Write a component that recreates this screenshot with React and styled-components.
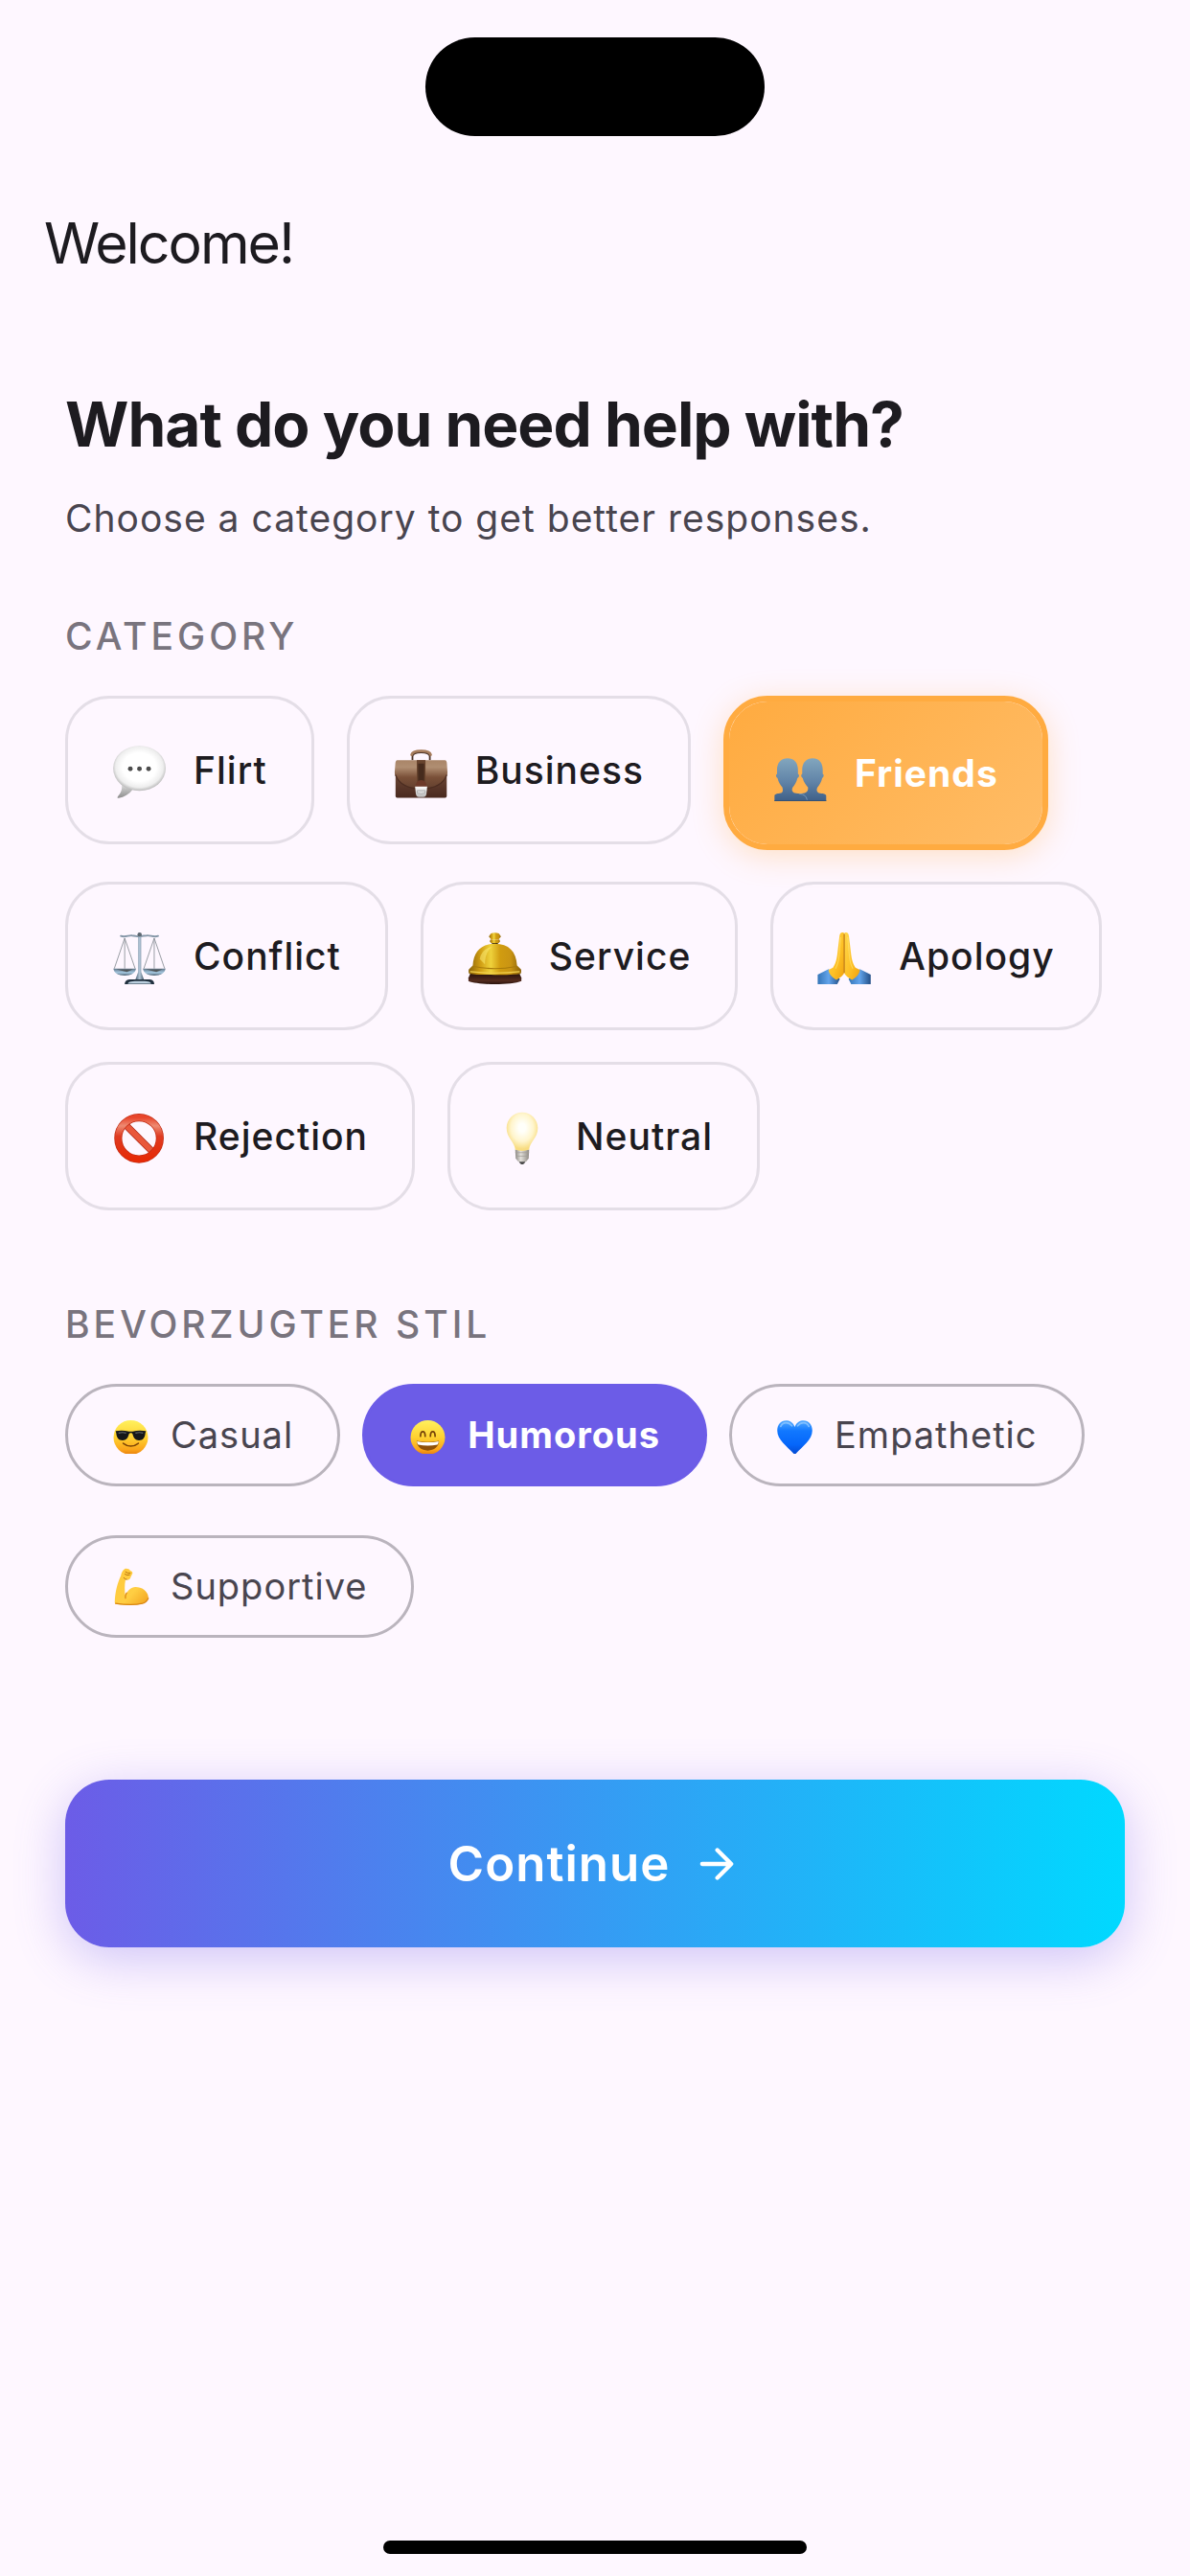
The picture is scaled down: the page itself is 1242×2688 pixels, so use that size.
import React, { useState } from "react";
import styled, { createGlobalStyle, css } from "styled-components";

const GlobalStyle = createGlobalStyle`
  * {
    box-sizing: border-box;
  }

  body {
    margin: 0;
    background: #fef7ff;
    color: #1d1b20;
    font-family: Inter, Roboto, "Liberation Sans", sans-serif;
  }

  button {
    font-family: inherit;
    cursor: pointer;
  }
`;

const Screen = styled.div`
  display: flex;
  flex-direction: column;
  min-height: 100vh;
  padding: 39px 0 23px;
`;

const Island = styled.div`
  align-self: center;
  width: 354px;
  height: 103px;
  border-radius: 52px;
  background: #000;
`;

const Header = styled.header`
  padding: 72px 46px 0;
`;

const Welcome = styled.p`
  margin: 0;
  font-size: 59px;
  line-height: 80px;
  letter-spacing: -2px;
`;

const Main = styled.main`
  display: flex;
  flex-direction: column;
  padding: 109px 68px 0;
`;

const Title = styled.h1`
  margin: 0;
  font-size: 64px;
  line-height: 80px;
  font-weight: 700;
  letter-spacing: -1px;
`;

const Subtitle = styled.p`
  margin: 30px 0 0;
  color: #49454f;
  font-size: 39px;
  line-height: 56px;
  letter-spacing: 1px;
`;

const Section = styled.section`
  display: flex;
  flex-direction: column;
  gap: 38px;
  margin-top: ${({ $space }) => $space}px;
`;

const SectionLabel = styled.h2`
  margin: 0;
  color: #79747e;
  font-size: 39px;
  line-height: 48px;
  font-weight: 500;
  letter-spacing: 4px;
`;

const ChipList = styled.div`
  display: flex;
  flex-wrap: wrap;
  align-items: flex-start;
  gap: ${({ $gap }) => $gap};
`;

const Chip = styled.button`
  display: flex;
  align-items: center;
  color: #1d1b20;
  background: transparent;
  letter-spacing: 1px;
  white-space: nowrap;

  svg {
    display: block;
    flex: none;
  }
`;

const CategoryChip = styled(Chip)`
  gap: 27px;
  padding: 45px 46px;
  border: 3px solid #e4dee7;
  border-radius: 46px;
  font-size: 39px;
  line-height: 59px;
  font-weight: 500;

  svg {
    width: 58px;
    height: 58px;
  }

  ${({ $active }) =>
    $active &&
    css`
      border: 6px solid #ffab40;
      background: linear-gradient(135deg, #ffab40, #ffbc66) padding-box;
      box-shadow: 0 6px 32px rgba(255, 171, 64, 0.3);
      color: #fff;
      font-weight: 700;
    `}
`;

const StyleChip = styled(Chip)`
  gap: 22px;
  padding: 26px 46px;
  border: 3px solid #bab4bd;
  border-radius: 54px;
  color: #49454f;
  font-size: 38px;
  line-height: 49px;
  font-weight: 400;

  svg {
    width: 39px;
    height: 39px;
  }

  ${({ $active }) =>
    $active &&
    css`
      border-color: #6c5ce7;
      background: #6c5ce7;
      color: #fff;
      font-weight: 700;
    `}
`;

const ContinueButton = styled.button`
  display: flex;
  align-items: center;
  justify-content: center;
  gap: 23px;
  margin-top: 148px;
  padding: 56px;
  border: 0;
  border-radius: 46px;
  background: linear-gradient(90deg, #6c5ce7, #00d9ff);
  box-shadow: 0 12px 52px rgba(108, 92, 231, 0.33);
  color: #fff;
  font-size: 51px;
  line-height: 63px;
  font-weight: 600;
  letter-spacing: 1px;

  svg {
    width: 52px;
    height: 52px;
  }
`;

const HomeIndicator = styled.div`
  align-self: center;
  width: 442px;
  height: 14px;
  margin-top: auto;
  border-radius: 7px;
  background: #000;
`;

const Icon = ({ children }) => (
  <svg viewBox="0 0 64 64" aria-hidden="true">
    {children}
  </svg>
);

const SpeechIcon = () => (
  <Icon>
    <defs>
      <radialGradient id="speech" cx="0.5" cy="0.47" r="0.53">
        <stop offset="0.6" stopColor="#fff" />
        <stop offset="0.85" stopColor="#eee" />
        <stop offset="1" stopColor="#b8b8b8" />
      </radialGradient>
      <linearGradient id="speechTail" x1="0" y1="0" x2="0" y2="1">
        <stop offset="0" stopColor="#dcdcdc" />
        <stop offset="1" stopColor="#8d8d8d" />
      </linearGradient>
    </defs>
    <path d="M11 48c1 6-1 10-4.500 14-.8 1.200-.2 2 1.200 1.700 6-1 12-4.500 16-10z" fill="url(#speechTail)" />
    <ellipse cx="31.500" cy="29.500" rx="30.300" ry="26" fill="url(#speech)" />
    <circle cx="21" cy="30" r="2.700" fill="#4c4c4c" />
    <circle cx="31.500" cy="30" r="2.700" fill="#4c4c4c" />
    <circle cx="42" cy="30" r="2.700" fill="#4c4c4c" />
  </Icon>
);

const BriefcaseIcon = () => (
  <Icon>
    <defs>
      <linearGradient id="flap" x1="0" y1="0" x2="0" y2="1">
        <stop offset="0" stopColor="#a98568" />
        <stop offset="0.25" stopColor="#b08e72" />
        <stop offset="0.6" stopColor="#7a5038" />
        <stop offset="1" stopColor="#63402f" />
      </linearGradient>
      <linearGradient id="caseBody" x1="0" y1="0" x2="0" y2="1">
        <stop offset="0" stopColor="#6e4836" />
        <stop offset="1" stopColor="#49291f" />
      </linearGradient>
      <linearGradient id="clasp" x1="0" y1="0" x2="0" y2="1">
        <stop offset="0" stopColor="#fff" />
        <stop offset="1" stopColor="#b9b9b9" />
      </linearGradient>
    </defs>
    <path d="M21.500 20v-4c0-4 5-5 10-5s10 1 10 5v4" fill="none" stroke="#4b3327" strokeWidth="2" />
    <path d="M20.500 14c1-4 6-4.500 11-4.500s10 .5 11 4.500" fill="none" stroke="#a67c5c" strokeWidth="3" strokeLinecap="round" />
    <path d="M2 34h59v27.500q0 2-2 2H4q-2 0-2-2z" fill="url(#caseBody)" />
    <path d="M4 20h55q2 0 2.200 4l.6 10c0 4-1 5-3 7-6 8-15 12-27.300 12S10 49 4 41c-2-2-3-3-3-7l.8-10Q2 20 4 20z" fill="url(#flap)" />
    <path d="M2 37c4 11 15 16 29.500 16S57 48 61 37" fill="none" stroke="#4c2d21" strokeWidth="1.200" />
    <path d="M26.500 20h10v27h-10z" fill="#67432d" />
    <path d="M28 24h7v20h-7z" fill="#462b1d" />
    <path d="M25 51c0-5 3-8 6.500-8s6.500 3 6.500 8z" fill="#6d3a29" />
    <path d="M24.500 50.500h14l-1 9q-.5 3-3 3h-6q-2.500 0-3-3z" fill="url(#clasp)" />
    <path d="M27 55h9v3q-4.500 2-9 0z" fill="#d9d9d9" stroke="#999" strokeWidth=".7" />
  </Icon>
);

const PeopleIcon = () => (
  <Icon>
    <defs>
      <linearGradient id="people" x1="0" y1="14" x2="0" y2="64" gradientUnits="userSpaceOnUse">
        <stop offset="0" stopColor="#83a7be" />
        <stop offset="0.55" stopColor="#6184a8" />
        <stop offset="1" stopColor="#3e5f87" />
      </linearGradient>
    </defs>
    <path
      d="M45.500 14.500c7 0 11.500 5 11.500 13v5c2 1 1 4-.6 5-1 5-3.400 8-5.400 10.500-2 4 0 6.500 3 7 4 .5 7 1 7 3V64H31V55.500c5-.5 10-1.500 9-7.500-2-2.500-5-5.500-6-10.500-1.600-1-2.600-4-.6-5v-5c0-8 5-13 12.100-13z"
      fill="url(#people)"
    />
    <path
      d="M16.500 14.500c7.500 0 12 5 12 13v5c2 1 1.500 4-.6 5-1 5-3.400 8-5.400 10.500-2 4 0 6.500 4 7 6 .5 12 1 12.500 9H1.500v-6c0-2 3-2.500 6-3 4-.5 4-3 3-7C8.500 45.500 6 42.500 5 37.500c-2-1-2.500-4-.6-5v-5c0-8 5-13 12.100-13z"
      fill="url(#people)"
    />
    <path d="M30 55.500q8 .5 9 7" fill="none" stroke="#7b9bb9" strokeWidth="1" />
    <path d="M1.500 63.500H61" stroke="#345074" strokeWidth="1" />
  </Icon>
);

const ScalesIcon = () => (
  <Icon>
    <defs>
      <linearGradient id="steel" x1="0" y1="0" x2="1" y2="0">
        <stop offset="0" stopColor="#40566b" />
        <stop offset="0.5" stopColor="#b5c9da" />
        <stop offset="1" stopColor="#3b4d60" />
      </linearGradient>
      <linearGradient id="pan" x1="0" y1="0" x2="0" y2="1">
        <stop offset="0" stopColor="#5d7285" />
        <stop offset="0.6" stopColor="#a9cbe3" />
        <stop offset="1" stopColor="#46596b" />
      </linearGradient>
    </defs>
    <path d="M10 8.500c5 2 9-1 13-.5 4 0 6 1.500 8.500 1s4.500-1 8.500-1c4-.5 8 2.500 13 .5" fill="none" stroke="#8597a8" strokeWidth="2" strokeLinecap="round" />
    <path d="M14.500 11 2.500 46M14.500 11v35M14.500 11l12 35M48.500 11l-12 35M48.500 11v35M48.500 11l12 35" fill="none" stroke="#8f959c" strokeWidth="1" />
    <path d="M1.500 46h26c-.5 5-5.500 8-13 8s-12.500-3-13-8zM35.500 46h26c-.5 5-5.500 8-13 8s-12.500-3-13-8z" fill="url(#pan)" />
    <path d="M5 47h19l-7 3zM39 47h19l-7 3z" fill="#51565a" />
    <path d="M30 8h3.500v42l3.500 9.500H26.500L30 50z" fill="url(#steel)" />
    <circle cx="31.700" cy="7" r="2.500" fill="#5d6872" />
    <path d="M14.500 64c0-4 3-5.500 7-5.500h20.500c4 0 6.500 1.500 6.500 5.500z" fill="#20303e" />
    <path d="M18 63.500c1-2.500 5-3 14-3s12 .5 13 3z" fill="#bbd0df" />
  </Icon>
);

const BellIcon = () => (
  <Icon>
    <defs>
      <linearGradient id="brass" x1="0" y1="0" x2="1" y2="0">
        <stop offset="0" stopColor="#8a6208" />
        <stop offset="0.22" stopColor="#cf9c12" />
        <stop offset="0.42" stopColor="#efd23c" />
        <stop offset="0.6" stopColor="#d19c10" />
        <stop offset="0.8" stopColor="#c99413" />
        <stop offset="1" stopColor="#8a6109" />
      </linearGradient>
      <linearGradient id="bellBase" x1="0" y1="0" x2="0" y2="1">
        <stop offset="0" stopColor="#1d0c08" />
        <stop offset="0.7" stopColor="#542b1e" />
        <stop offset="1" stopColor="#2a130d" />
      </linearGradient>
    </defs>
    <path d="M4 50h55l3 6.500v4c-6 2.500-18 3.500-30.500 3.500S7 63 1 60.500v-4z" fill="url(#bellBase)" />
    <path d="M28 14h7v5h-7z" fill="#3f2d07" />
    <path d="M27 5.500q4.500-1.500 9 0l2.500 3.500-2.500 3h-9l-2.500-3z" fill="url(#brass)" />
    <path d="M26.500 12.500h10l1 2-1.500 2h-9l-1.500-2z" fill="url(#brass)" />
    <path d="M31.500 17.500c16 0 24.500 9 25.500 25l4.500 4.500c.5 2 .5 4-.5 5-9 1.500-50 1.500-59 0-1-1-1-3-.5-5L6 42.500c1-16 9.500-25 25.500-25z" fill="url(#brass)" />
    <path d="M7 43.500q24.500 5 49 0" fill="none" stroke="#a87a0a" strokeWidth="1.200" />
    <path d="M14 35q2-12 14-14-8 6-8 20z" fill="#fff27a" opacity=".5" />
    <path d="M3 49.500q28.500 3 57 0" fill="none" stroke="#f1d050" strokeWidth="1.200" />
  </Icon>
);

const PrayIcon = () => (
  <Icon>
    <defs>
      <linearGradient id="hand" x1="0" y1="0" x2="1" y2="1">
        <stop offset="0" stopColor="#ffd84b" />
        <stop offset="0.6" stopColor="#fdbf24" />
        <stop offset="1" stopColor="#f0a00d" />
      </linearGradient>
      <linearGradient id="cuff" x1="0" y1="0" x2="1" y2="0">
        <stop offset="0" stopColor="#3475b8" />
        <stop offset="0.5" stopColor="#62a4eb" />
        <stop offset="1" stopColor="#234f87" />
      </linearGradient>
    </defs>
    <path d="M.5 53 13 46.500 26 58l-3 6H.5z" fill="url(#cuff)" />
    <path d="M61.500 53 49 46.500 36 58l3 6h22.500z" fill="url(#cuff)" />
    <path d="M30.800 5c-3-1.500-5 .5-5.300 4L23 30c-1 8-3 12-5 15l-5 2.500c0 5 5 9.500 9 11.500 4-2 8-5 8.800-8z" fill="url(#hand)" />
    <path d="M31.200 5c3-1.500 5 .5 5.300 4L39 30c1 8 3 12 5 15l5 2.500c0 5-5 9.500-9 11.500-4-2-8-5-8.800-8z" fill="url(#hand)" />
    <path d="M31 6v45" stroke="#c67f0c" strokeWidth="1.500" />
    <path d="M27 10 25 32q-1 9-4 14M35 10l2 22q1 9 4 14" fill="none" stroke="#ffe16d" strokeWidth="1.200" opacity=".7" />
  </Icon>
);

const ProhibitedIcon = () => (
  <Icon>
    <defs>
      <linearGradient id="stop" x1="0" y1="0" x2="0" y2="1">
        <stop offset="0" stopColor="#e8452b" />
        <stop offset="0.2" stopColor="#ee8a72" />
        <stop offset="0.45" stopColor="#df3b22" />
        <stop offset="1" stopColor="#e62a06" />
      </linearGradient>
    </defs>
    <path d="M14 17 48 51" stroke="#ae2412" strokeWidth="8" />
    <path d="M14 17 48 51" stroke="#e9573b" strokeWidth="6.500" />
    <circle cx="31" cy="34" r="24" fill="none" stroke="#c22a12" strokeWidth="9" />
    <circle cx="31" cy="34" r="24" fill="none" stroke="url(#stop)" strokeWidth="7.500" />
  </Icon>
);

const BulbIcon = () => (
  <Icon>
    <defs>
      <radialGradient id="bulb" cx="0.5" cy="0.4" r="0.55">
        <stop offset="0.2" stopColor="#fffffa" />
        <stop offset="0.65" stopColor="#fff5cd" />
        <stop offset="1" stopColor="#f8dc80" />
      </radialGradient>
      <linearGradient id="socket" x1="0" y1="0" x2="1" y2="0">
        <stop offset="0" stopColor="#8c8984" />
        <stop offset="0.4" stopColor="#e3e0db" />
        <stop offset="1" stopColor="#8f8a83" />
      </linearGradient>
    </defs>
    <path d="M27.500 59h9l-2 4c-1.500 1.500-3.500 1.500-5 0z" fill="#4a4a4a" />
    <path d="M24 47h16l-.5 10-3 4h-9l-3-4z" fill="url(#socket)" />
    <path d="M24 50.500h16M24.500 54.500h15" stroke="#a19d97" strokeWidth=".8" />
    <path d="M32 4c10 0 18 8 18 18 0 12-9.500 16-10 25-4 2-12 2-16 0-.5-9-10-13-10-25C14 12 22 4 32 4z" fill="url(#bulb)" />
  </Icon>
);

const FaceGradient = ({ id }) => (
  <defs>
    <linearGradient id={id} x1="0" y1="0" x2="0" y2="1">
      <stop offset="0" stopColor="#fff15e" />
      <stop offset="0.5" stopColor="#ffd130" />
      <stop offset="0.85" stopColor="#fba51b" />
      <stop offset="1" stopColor="#e87f0b" />
    </linearGradient>
  </defs>
);

const CoolIcon = () => (
  <Icon>
    <FaceGradient id="cool" />
    <circle cx="32" cy="36" r="29.500" fill="url(#cool)" />
    <path d="M19 46q13 10 26 0" fill="none" stroke="#7d4507" strokeWidth="2.500" strokeLinecap="round" />
    <path d="M6 25q13-2 23 1h6q10-3 23-1l-1 3.500c-1 9-4 12.500-11 12.500-6 0-9-3.500-11-11-1-2-5-2-6 0-2 7.500-5 11-11 11-7 0-10-3.500-11-12.500z" fill="#161719" />
    <path d="M11 28.500q7-2 13 0M40 28.500q7-2 13 0" fill="none" stroke="#666a70" strokeWidth="2" />
  </Icon>
);

const GrinIcon = () => (
  <Icon>
    <FaceGradient id="grin" />
    <circle cx="32" cy="36" r="29.500" fill="url(#grin)" />
    <path d="M19.500 34q0-8 4-8t4 8M36.500 34q0-8 4-8t4 8" fill="none" stroke="#754108" strokeWidth="2.800" strokeLinecap="round" />
    <path d="M13 42q19 4 38 0c0 10-8 16.500-19 16.500S13 52 13 42z" fill="#8f5109" />
    <path d="M13.500 42.500q18.500 4 37 0 0 4-2 6-16.500 3-33 0-2-2-2-6z" fill="#fff" />
  </Icon>
);

const HeartIcon = () => (
  <Icon>
    <defs>
      <linearGradient id="heart" x1="0" y1="0" x2="0" y2="1">
        <stop offset="0" stopColor="#55abff" />
        <stop offset="0.3" stopColor="#1178ff" />
        <stop offset="0.7" stopColor="#0566fa" />
        <stop offset="1" stopColor="#0448cf" />
      </linearGradient>
    </defs>
    <path d="M32 18C29 10 23 7 17 7 8 7 2 14 2 24c0 17 18 27 30 42 12-15 30-25 30-42C62 14 56 7 47 7c-6 0-12 3-15 11z" fill="url(#heart)" />
    <path d="M8 17q3-6 9-6 6 0 10 5M37 16q4-5 10-5 6 0 9 6" fill="none" stroke="#a9d6ff" strokeWidth="3" strokeLinecap="round" opacity=".6" />
  </Icon>
);

const MuscleIcon = () => (
  <Icon>
    <defs>
      <linearGradient id="muscle" x1="0" y1="0" x2="1" y2="1">
        <stop offset="0" stopColor="#ffc93b" />
        <stop offset="0.6" stopColor="#ffce43" />
        <stop offset="1" stopColor="#f1a01c" />
      </linearGradient>
    </defs>
    <path
      d="M22 1.500c-4 2-6 7-7 12C10 24 5 40 4.500 59q0 3 3 3.500c12 2 30 2 43-1 8-2.500 12-7 11.500-12-1.500-10-11-16.500-22-16.500-8 .5-13 6-17.500 14-1-7-1.500-17 .5-27 5 2 8-.5 9-4.500l3-6c0-2-1-4-4-4.500-1-3-6-4.500-9-3.500z"
      fill="url(#muscle)"
    />
    <path d="M25 43q-3 4-2 9M6 61q28 4 46 0 7-2 10-9" fill="none" stroke="#d98512" strokeWidth="2" strokeLinecap="round" />
    <path d="M23 7q3 3 8 2M22 11q4 3 8 1M20 17q2 3 5 3" fill="none" stroke="#b8730c" strokeWidth="1.600" strokeLinecap="round" />
  </Icon>
);

const ArrowIcon = () => (
  <svg viewBox="0 0 24 24" fill="none" stroke="currentColor" strokeWidth="2" strokeLinecap="round" strokeLinejoin="round" aria-hidden="true">
    <path d="M5 12h13.500M12.300 5.300 19 12l-6.700 6.700" />
  </svg>
);

const categories = [
  { name: "Flirt", icon: SpeechIcon },
  { name: "Business", icon: BriefcaseIcon },
  { name: "Friends", icon: PeopleIcon },
  { name: "Conflict", icon: ScalesIcon },
  { name: "Service", icon: BellIcon },
  { name: "Apology", icon: PrayIcon },
  { name: "Rejection", icon: ProhibitedIcon },
  { name: "Neutral", icon: BulbIcon },
];

const styles = [
  { name: "Casual", icon: CoolIcon },
  { name: "Humorous", icon: GrinIcon },
  { name: "Empathetic", icon: HeartIcon },
  { name: "Supportive", icon: MuscleIcon },
];

function App() {
  const [category, setCategory] = useState("Friends");
  const [style, setStyle] = useState("Humorous");

  return (
    <>
      <GlobalStyle />
      <Screen>
        <Island />
        <Header>
          <Welcome>Welcome!</Welcome>
        </Header>
        <Main>
          <Title>What do you need help with?</Title>
          <Subtitle>Choose a category to get better responses.</Subtitle>

          <Section $space={71}>
            <SectionLabel>CATEGORY</SectionLabel>
            <ChipList $gap="33px 34px">
              {categories.map(({ name, icon: Glyph }) => (
                <CategoryChip
                  key={name}
                  type="button"
                  $active={name === category}
                  aria-pressed={name === category}
                  onClick={() => setCategory(name)}
                >
                  <Glyph />
                  {name}
                </CategoryChip>
              ))}
            </ChipList>
          </Section>

          <Section $space={95}>
            <SectionLabel>BEVORZUGTER STIL</SectionLabel>
            <ChipList $gap="51px 23px">
              {styles.map(({ name, icon: Glyph }) => (
                <StyleChip
                  key={name}
                  type="button"
                  $active={name === style}
                  aria-pressed={name === style}
                  onClick={() => setStyle(name)}
                >
                  <Glyph />
                  {name}
                </StyleChip>
              ))}
            </ChipList>
          </Section>

          <ContinueButton type="button">
            Continue
            <ArrowIcon />
          </ContinueButton>
        </Main>
        <HomeIndicator />
      </Screen>
    </>
  );
}

export default App;
